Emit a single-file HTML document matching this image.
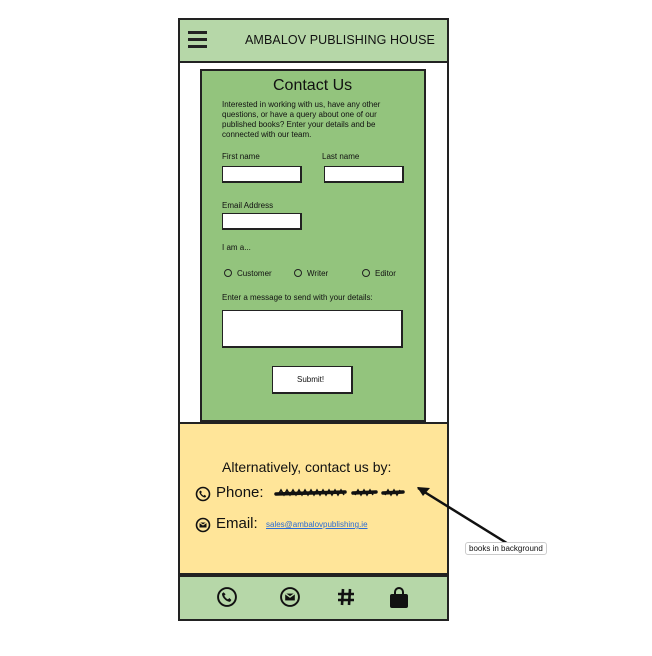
<!DOCTYPE html>
<html><head><style>
*{margin:0;padding:0;box-sizing:border-box}
body{width:652px;height:656px;background:#fff;position:relative;font-family:"Liberation Sans",sans-serif;color:#111;overflow:hidden}
.a{position:absolute}
.box{position:absolute;border:2px solid #222}
.inp{position:absolute;background:#fff;border:1.5px solid #222;border-right-width:2.5px;border-bottom-width:2.5px}
.t{position:absolute;font-size:8px;white-space:nowrap}
.r{position:absolute;width:8px;height:8px;border:1px solid #222;border-radius:50%;background:#93c47d}
</style></head><body>
<div class="box" style="left:178px;top:18px;width:271px;height:603px;background:#fff"></div>
<div class="box" style="left:178px;top:18px;width:271px;height:45px;background:#b6d7a8"></div>
<div class="a" style="left:188px;top:31px;width:19px;height:2.5px;background:#222"></div>
<div class="a" style="left:188px;top:38px;width:19px;height:2.5px;background:#222"></div>
<div class="a" style="left:188px;top:45px;width:19px;height:2.5px;background:#222"></div>
<div class="t" style="left:245px;top:33px;font-size:12.5px;letter-spacing:0.1px">AMBALOV PUBLISHING HOUSE</div>

<div class="box" style="left:200px;top:69px;width:226px;height:353px;background:#93c47d"></div>
<div class="t" style="left:273px;top:77px;font-size:16px">Contact Us</div>
<div class="t" style="left:222px;top:100px;line-height:10px">Interested in working with us, have any other<br>questions, or have a query about one of our<br>published books? Enter your details and be<br>connected with our team.</div>
<div class="t" style="left:222px;top:152px">First name</div>
<div class="t" style="left:322px;top:152px">Last name</div>
<div class="inp" style="left:222px;top:166px;width:80px;height:17px"></div>
<div class="inp" style="left:324px;top:166px;width:80px;height:17px"></div>
<div class="t" style="left:222px;top:201px">Email Address</div>
<div class="inp" style="left:222px;top:213px;width:80px;height:17px"></div>
<div class="t" style="left:222px;top:243px">I am a...</div>
<div class="r" style="left:224px;top:269px"></div><div class="t" style="left:237px;top:269px">Customer</div>
<div class="r" style="left:294px;top:269px"></div><div class="t" style="left:307px;top:269px">Writer</div>
<div class="r" style="left:362px;top:269px"></div><div class="t" style="left:375px;top:269px">Editor</div>
<div class="t" style="left:222px;top:293px">Enter a message to send with your details:</div>
<div class="inp" style="left:222px;top:310px;width:181px;height:38px"></div>
<div class="inp" style="left:272px;top:366px;width:81px;height:28px"></div>
<div class="t" style="left:297px;top:375px">Submit!</div>

<div class="box" style="left:178px;top:422px;width:271px;height:153px;background:#ffe599"></div>
<div class="t" style="left:222px;top:459px;font-size:14px">Alternatively, contact us by:</div>
<svg class="a" style="left:195px;top:486px" width="16" height="16" viewBox="0 0 16 16"><circle cx="8" cy="8" r="6.5" fill="none" stroke="#111" stroke-width="1.6"/><path d="M5.5 4.5l1.5 1.5-1 1c.5 1.2 1.5 2.2 2.7 2.7l1-1 1.5 1.5-1 1.3C7.5 11.5 4.5 8.5 4.3 5.6z" fill="#111"/></svg>
<div class="t" style="left:216px;top:484px;font-size:15px">Phone:</div>
<svg class="a" style="left:273px;top:485px" width="135" height="14"><g stroke="#111" stroke-width="3.5" stroke-linecap="round" fill="none"><path d="M3 9L72 7"/><path d="M80 8L103 7"/><path d="M110 8L130 7"/></g><g stroke="#111" stroke-width="1.5" fill="none"><path d="M5 10l3-5 3 5 3-5 3 5 3-5 3 5 3-5 3 5 3-5 3 5 3-5 3 5 3-5 3 5 3-5 3 5 3-5 3 5 3-5 3 5 3-5 3 5"/><path d="M82 10l3-5 3 5 3-5 3 5 3-5 3 5"/><path d="M112 10l3-5 3 5 3-5 3 5 3-5"/></g></svg>
<svg class="a" style="left:195px;top:517px" width="16" height="16" viewBox="0 0 16 16"><circle cx="8" cy="8" r="6.5" fill="none" stroke="#111" stroke-width="1.6"/><rect x="4.5" y="5.5" width="7" height="5" fill="#111"/><path d="M4.5 5.5l3.5 2.5 3.5-2.5" stroke="#ffe599" fill="none"/></svg>
<div class="t" style="left:216px;top:515px;font-size:15px">Email:</div>
<div class="t" style="left:266px;top:520px;color:#2a6bd6;text-decoration:underline">sales@ambalovpublishing.ie</div>
<svg class="a" style="left:410px;top:480px" width="120" height="80"><path d="M8 8L108 70" stroke="#111" stroke-width="2.5"/><path d="M7 7l13 1-7 8z" fill="#111"/></svg>
<div class="t" style="left:465px;top:542px;border:1px solid #ccc;border-radius:3px;background:#fff;padding:1px 3px">books in background</div>

<div class="box" style="left:178px;top:575px;width:271px;height:46px;background:#b6d7a8"></div>
<svg class="a" style="left:216px;top:586px" width="22" height="22" viewBox="0 0 16 16"><circle cx="8" cy="8" r="6.5" fill="none" stroke="#111" stroke-width="1.4"/><path d="M5.5 4.5l1.5 1.5-1 1c.5 1.2 1.5 2.2 2.7 2.7l1-1 1.5 1.5-1 1.3C7.5 11.5 4.5 8.5 4.3 5.6z" fill="#111"/></svg>
<svg class="a" style="left:279px;top:586px" width="22" height="22" viewBox="0 0 16 16"><circle cx="8" cy="8" r="6.5" fill="none" stroke="#111" stroke-width="1.4"/><rect x="4.5" y="5.5" width="7" height="5" fill="#111"/><path d="M4.5 5.5l3.5 2.5 3.5-2.5" stroke="#b6d7a8" fill="none"/></svg>
<svg class="a" style="left:336px;top:587px" width="20" height="20" viewBox="0 0 20 20"><path d="M7 2L6 18M14 2L13 18M2 7H18M2 13H18" stroke="#111" stroke-width="2.6"/></svg>
<svg class="a" style="left:388px;top:586px" width="22" height="24" viewBox="0 0 22 24"><path d="M7 9V6a4 4 0 018 0v3" stroke="#111" stroke-width="2" fill="none"/><rect x="2" y="8" width="18" height="14" rx="2" fill="#111"/></svg>
</body></html>
